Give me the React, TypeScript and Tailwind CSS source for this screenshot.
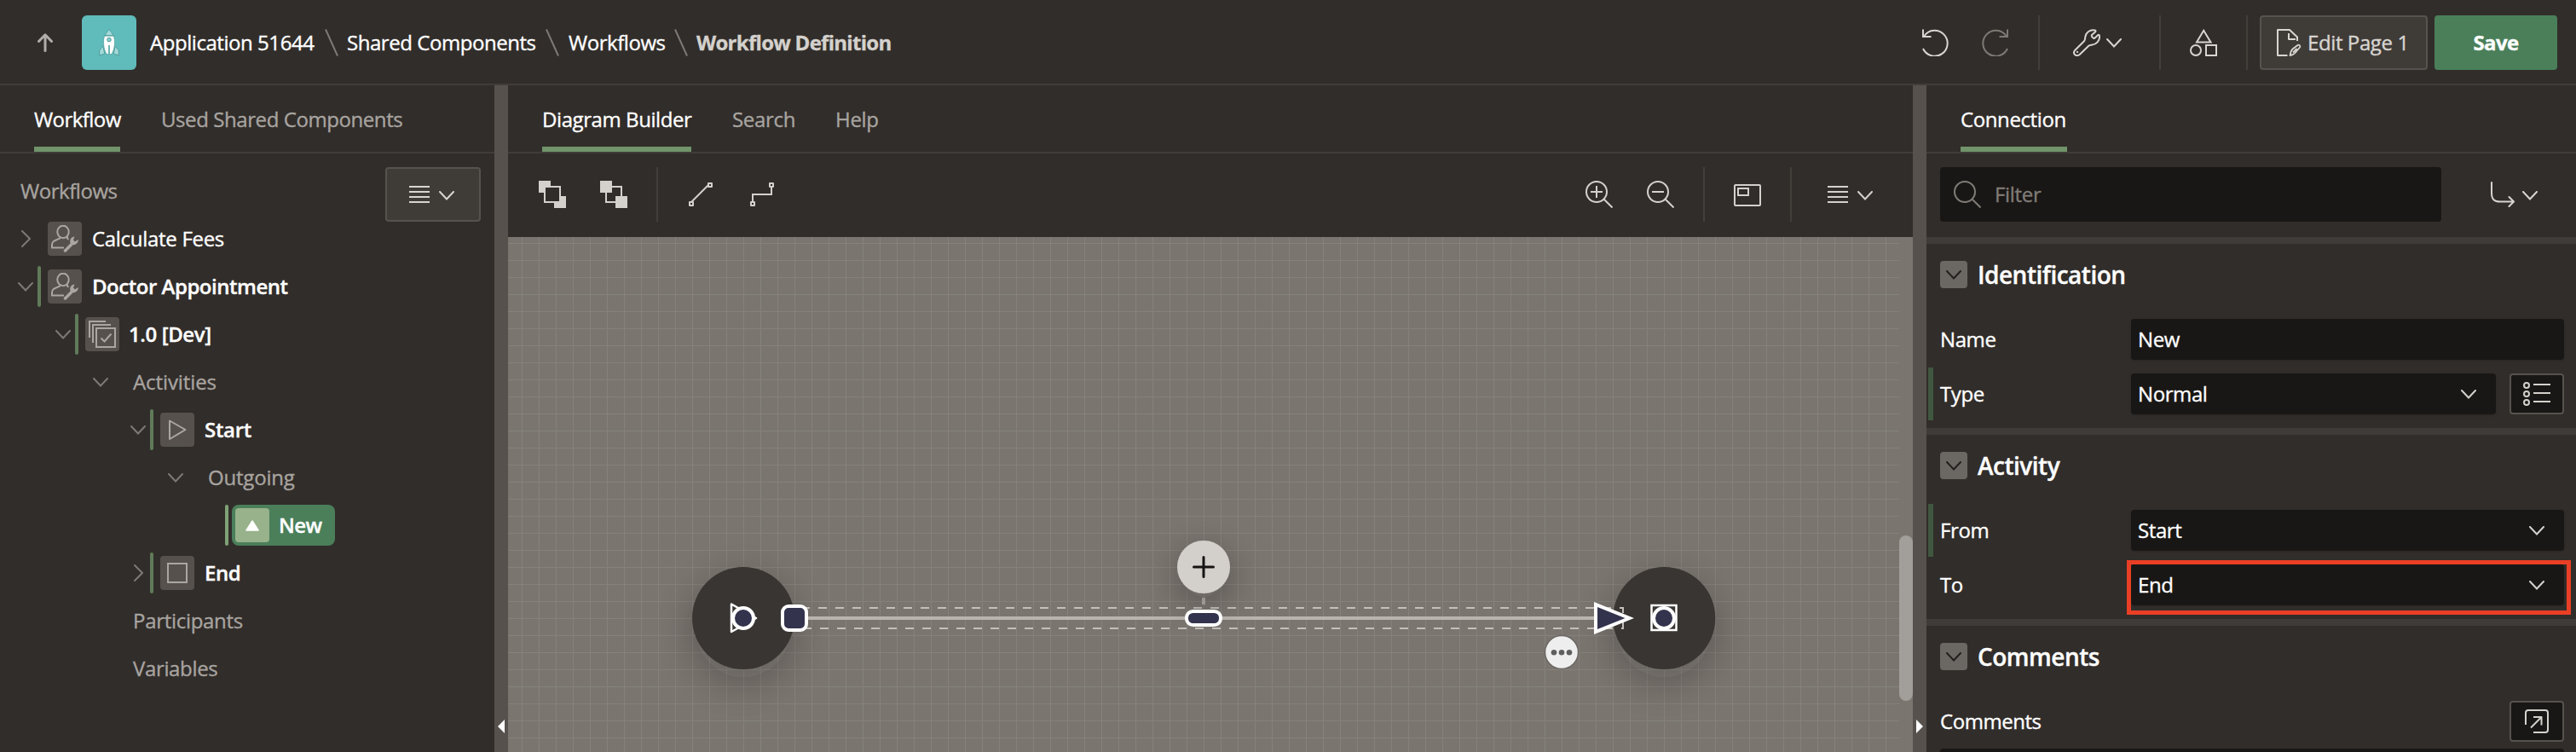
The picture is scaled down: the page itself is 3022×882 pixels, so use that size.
import React from "react";

type IconProps = { className?: string };

function Chevron({ open = true, className = "" }: { open?: boolean; className?: string }) {
  return open ? (
    <svg viewBox="0 0 18 11" width="18" height="11" className={`shrink-0 ${className}`} fill="none" stroke="currentColor" strokeWidth="2" strokeLinecap="round">
      <path d="M1 1l8 8.500L17 1" />
    </svg>
  ) : (
    <svg viewBox="0 0 11 20" width="11" height="20" className={`shrink-0 ${className}`} fill="none" stroke="currentColor" strokeWidth="2" strokeLinecap="round">
      <path d="M1 1l9 9-9 9" />
    </svg>
  );
}

function MenuLines({ className = "" }: IconProps) {
  return (
    <svg viewBox="0 0 24 20" width="24" height="20" className={`shrink-0 ${className}`} fill="currentColor">
      <path d="M0 0h24v2H0zM0 6h24v2H0zM0 12h24v2H0zM0 18h24v2H0z" />
    </svg>
  );
}

function Stroke32({ children, className = "" }: { children: React.ReactNode; className?: string }) {
  return (
    <svg viewBox="0 0 32 32" width="32" height="32" className={`shrink-0 ${className}`} fill="none" stroke="currentColor" strokeWidth="2">
      {children}
    </svg>
  );
}

function Rocket() {
  return (
    <svg viewBox="0 0 24 32" width="24" height="32">
      <path d="M5 20L.7 25v6l6-2zM19 20l4.300 5v6l-6-2z" fill="#a3d9d9" stroke="#4d9c9c" strokeWidth="1" />
      <path d="M12 .8C9.500 3.500 7.500 6.300 6.800 9h10.400C16.500 6.300 14.500 3.500 12 .8z" fill="#a3d9d9" stroke="#4d9c9c" strokeWidth="0.800" />
      <path d="M6.500 8h11c1.700 7 1.300 15-2.500 21.500h-6C5.200 23 4.800 15 6.500 8z" fill="#fff" stroke="#4d9c9c" strokeWidth="0.700" />
      <path d="M6.500 7.800h11" stroke="#4d9c9c" strokeWidth="1" />
      <circle cx="12" cy="12.600" r="2.300" fill="#8ccfcf" stroke="#4d9c9c" strokeWidth="1" />
      <path d="M12 19v12" stroke="#6fb3b3" strokeWidth="2" />
    </svg>
  );
}

function Slash({ className = "" }: IconProps) {
  return (
    <svg viewBox="0 0 16 32" width="16" height="32" className={`shrink-0 ${className}`} fill="none" stroke="#7d7974" strokeWidth="2">
      <path d="M1 .5L15 31.500" />
    </svg>
  );
}

function Sep({ className = "" }: IconProps) {
  return <div className={`h-16 w-0.5 shrink-0 bg-[#423e3a] ${className}`} />;
}

function Header() {
  return (
    <header className="flex h-[100px] shrink-0 items-center border-b-2 border-[#403c38] pr-[22px] pl-11 pt-0.5">
      <svg viewBox="0 0 18 22" width="18" height="22" className="shrink-0 text-[#b1ada8]" fill="none" stroke="currentColor" strokeWidth="3">
        <path d="M9 20.500V2M1.500 9.500L9 1.800l7.500 7.700" strokeLinecap="round" strokeLinejoin="round" />
      </svg>
      <div className="ml-[34px] flex size-16 shrink-0 items-center justify-center rounded-md bg-[#60bbbb]">
        <Rocket />
      </div>
      <nav className="ml-4 flex items-center text-white">
        <span className="w-[205px] tracking-[-0.45px]">Application 51644</span>
        <Slash />
        <span className="ml-2.5 w-[233px] tracking-[-0.45px]">Shared Components</span>
        <Slash />
        <span className="ml-[11px] w-[124px] tracking-[-0.45px]">Workflows</span>
        <Slash />
        <span className="ml-2.5 font-bold tracking-[-0.72px] text-[#d4d1cd]">Workflow Definition</span>
      </nav>
      <div className="ml-auto flex items-center text-[#d8d5d1]">
        <Stroke32>
          <path d="M1 0.500v8.500h9.500M2.500 8A15 15 0 1 1 1 23" />
        </Stroke32>
        <Stroke32 className="ml-[37px] text-[#7d7974]">
          <path d="M31 0.500v8.500h-9.500M29.500 8A15 15 0 1 0 31 23" />
        </Stroke32>
        <Sep className="ml-[35px] bg-[#3a3632]" />
        <Stroke32 className="ml-[39px]">
          <path d="M1.900 25.300L13 14.300C14.300 13 14 11 14.300 9.300 15 4 20 .300 25.500 1.500c1.300.3 1.300 1 .5 2L22.500 6.500c-.8.700-1 1.300-.5 2.300l1.400 1.600c.8.700 1.400.7 2.300 0L29 7.300c1-.8 1.900-.6 2 .7.600 5.500-3.500 10-8.500 10.600-1.500.2-3 .1-4.200 1.200L7.700 30C3.700 33 -.800 29 1.900 25.300z" strokeLinejoin="round" />
          <circle cx="5" cy="27" r="0.800" fill="currentColor" strokeWidth="1" />
        </Stroke32>
        <Chevron className="ml-[7px]" />
        <Sep className="ml-11" />
        <Stroke32 className="ml-[34px]">
          <path d="M16.200 1.800L24.500 15.500H8zM19 19h12v12H19z" />
          <circle cx="7" cy="25" r="6" />
        </Stroke32>
        <Sep className="ml-[34px]" />
        <div className="ml-3.5 flex h-16 w-[197px] items-center rounded border-2 border-[#56524d] bg-[#3f3b37] pl-[18px]">
          <Stroke32>
            <path d="M12.500 31H1V1h14l9 8.500V14M14 5v7h8" strokeLinejoin="round" />
            <path d="M15.500 31c.3-3 1-5.500 3-7.500l6-4.500c1.500-1 3.500.5 2.500 2.500l-5.500 6.500c-1.500 1.800-3.500 2.600-6 3zM19 27.500l4.500-4.500" strokeLinejoin="round" strokeWidth="1.800" />
          </Stroke32>
          <span className="ml-1 tracking-[-0.4px]">Edit Page 1</span>
        </div>
        <div className="ml-2 flex h-16 w-36 items-center justify-center rounded bg-[#4a7f5a] font-bold tracking-[-0.6px] text-white">Save</div>
      </div>
    </header>
  );
}

function Tab({ label, active = false, className = "" }: { label: string; active?: boolean; className?: string }) {
  return (
    <div className={`flex h-full items-center border-b-6 pt-2 ${active ? "border-[#71946a] text-white" : "border-transparent text-[#a8a4a0]"} ${className}`}>
      {label}
    </div>
  );
}

function TabBar({ children, className = "" }: { children: React.ReactNode; className?: string }) {
  return <div className={`flex h-20 shrink-0 border-b-2 border-[#403c38] ${className}`}>{children}</div>;
}

function UserWrench() {
  return (
    <svg viewBox="0 0 32 32" width="32" height="32" fill="none" stroke="currentColor" strokeWidth="2">
      <path d="M10.500 15.500C3 18.500 1 19.500 1 23v3.500h14M10.500 15.500v-2M19 13.500v2l1.500 1.200" />
      <ellipse cx="14" cy="8" rx="6.700" ry="7.300" />
      <path d="M16.500 30L24 22.500" strokeWidth="3.500" strokeLinecap="round" />
      <path d="M27.500 13.500c-4 .5-6 3.500-5 7.500 1 3 7.500 3.500 9.200-2.500l-.2-1.500-3.500 2.500-2-2z" fill="currentColor" stroke="none" />
    </svg>
  );
}

function Versions() {
  return (
    <svg viewBox="0 0 32 32" width="32" height="32" fill="none" stroke="currentColor" strokeWidth="2">
      <path d="M1 20V1h19M5 26V5h21M9 9h22v22H9zM14.500 20.500l4 4 8-9" />
    </svg>
  );
}

function PlayIcon() {
  return (
    <svg viewBox="0 0 32 32" width="32" height="32" fill="none" stroke="currentColor" strokeWidth="2">
      <path d="M7 5.500v21.500L25.500 16z" strokeLinejoin="round" />
    </svg>
  );
}

function BoxIcon() {
  return (
    <svg viewBox="0 0 32 32" width="32" height="32" fill="none" stroke="currentColor" strokeWidth="2">
      <path d="M5 5h22v22H5z" />
    </svg>
  );
}

type RowProps = {
  label: string;
  indent: string;
  state?: "open" | "closed";
  icon?: React.ReactNode;
  bar?: boolean;
  muted?: boolean;
  text?: string;
};

function TreeRow({ label, indent, state, icon, bar, muted, text = "" }: RowProps) {
  return (
    <div className={`flex h-14 items-center ${indent}`}>
      <div className="flex w-[23px] shrink-0 text-[#7d7974]">
        {state && <Chevron open={state === "open"} className={state === "closed" ? "ml-1" : ""} />}
      </div>
      <div className={`h-12 w-1 shrink-0 rounded-full ${bar ? "bg-[#607b59]" : ""}`} />
      {icon ? (
        <div className="mr-3 ml-2 flex size-10 shrink-0 items-center justify-center rounded bg-[#56514c] text-[#aaa6a2]">{icon}</div>
      ) : (
        <div className="w-5" />
      )}
      <span className={`${muted ? "text-[#a8a4a0]" : "text-white"} ${text}`}>{label}</span>
    </div>
  );
}

function TreePanel() {
  return (
    <aside className="flex w-[580px] shrink-0 flex-col">
      <TabBar className="pl-10">
        <Tab label="Workflow" active className="w-[101px] tracking-[-0.55px]" />
        <Tab label="Used Shared Components" className="ml-12 tracking-[-0.42px]" />
      </TabBar>
      <div className="flex items-start justify-between pt-4 pr-4">
        <div className="flex flex-col">
          <div className="flex h-14 items-center pl-6 tracking-[-0.45px] text-[#a8a4a0]">Workflows</div>
          <TreeRow label="Calculate Fees" indent="pl-[21px]" state="closed" icon={<UserWrench />} text="tracking-[-0.3px]" />
          <TreeRow label="Doctor Appointment" indent="pl-[21px]" state="open" bar icon={<UserWrench />} text="font-semibold tracking-[-0.48px]" />
          <TreeRow label="1.0 [Dev]" indent="pl-[65px]" state="open" bar icon={<Versions />} text="-ml-px font-semibold tracking-[-0.4px]" />
          <TreeRow label="Activities" indent="pl-[109px]" state="open" muted text="tracking-[-0.1px]" />
          <TreeRow label="Start" indent="pl-[153px]" state="open" bar icon={<PlayIcon />} text="font-semibold tracking-[-0.3px]" />
          <TreeRow label="Outgoing" indent="pl-[197px]" state="open" muted text="tracking-[-0.2px]" />
          <div className="flex h-14 items-center pl-[264px]">
            <div className="h-12 w-1 rounded-full bg-[#7fa276]" />
            <div className="ml-1 flex h-12 w-[121px] items-center rounded-lg bg-[#4a7f5a] pl-1">
              <div className="flex size-10 items-center justify-center rounded bg-[#98b28c]">
                <svg viewBox="0 0 16 13" width="16" height="13" fill="#fff" stroke="#fff" strokeWidth="1.500" strokeLinejoin="round">
                  <path d="M8 1l7 11H1z" />
                </svg>
              </div>
              <span className="ml-[11px] font-semibold tracking-[-0.6px] text-white">New</span>
            </div>
          </div>
          <TreeRow label="End" indent="pl-[153px]" state="closed" bar icon={<BoxIcon />} text="font-semibold tracking-[-0.4px]" />
          <TreeRow label="Participants" indent="pl-[109px]" muted text="tracking-[-0.3px]" />
          <TreeRow label="Variables" indent="pl-[109px]" muted text="tracking-[-0.35px]" />
        </div>
        <div className="flex h-16 w-28 items-center rounded border-2 border-[#56524d] bg-[#3f3b37] pl-[26px] text-[#d8d5d1]">
          <MenuLines />
          <Chevron className="ml-[11px] mt-0.5" />
        </div>
      </div>
    </aside>
  );
}

function Splitter({ right = false }: { right?: boolean }) {
  return (
    <div className="flex w-4 shrink-0 items-end justify-center bg-[#56514c] pb-[22px]">
      <svg viewBox="0 0 8 16" width="8" height="16" fill="#fff">
        {right ? <path d="M0 0l8 8-8 8z" /> : <path d="M8 0L0 8l8 8z" />}
      </svg>
    </div>
  );
}

function Diagram() {
  const navy = "#33334d";
  return (
    <svg viewBox="596 278 1632 604" width="1632" height="604" className="block shrink-0">
      <defs>
        <pattern id="grid" x="612" y="285" width="20" height="20" patternUnits="userSpaceOnUse">
          <path d="M0 0h20v1H0zM0 1h1v19H0z" fill="#85817b" />
        </pattern>
        <filter id="soft" x="-100%" y="-100%" width="300%" height="300%">
          <feDropShadow dx="0" dy="14" stdDeviation="24" floodColor="#1c1816" floodOpacity="0.280" />
        </filter>
        <filter id="small" x="-100%" y="-100%" width="300%" height="300%">
          <feDropShadow dx="0" dy="12" stdDeviation="20" floodColor="#1c1816" floodOpacity="0.300" />
        </filter>
      </defs>
      <rect x="596" y="278" width="1632" height="604" fill="#7a756f" />
      <rect x="596" y="278" width="1632" height="604" fill="url(#grid)" />

      <circle cx="872" cy="725" r="60" fill="#393530" filter="url(#soft)" />
      <circle cx="1952.300" cy="725" r="60" fill="#393530" filter="url(#soft)" />

      <path d="M940 713H1904V737H940" fill="none" stroke="#c3bfbb" strokeWidth="2" strokeDasharray="10 10" />
      <path d="M932 725H1872" stroke="#b9b4ae" strokeWidth="4" />
      <path d="M1412 701v8" stroke="#b0aca7" strokeWidth="4" />

      <path d="M858 708.500v32.500l29-16z" fill="none" stroke="#fff" strokeWidth="2.500" strokeLinejoin="round" />
      <circle cx="872" cy="725" r="12" fill={navy} stroke="#fff" strokeWidth="4" />
      <rect x="918" y="711" width="28" height="28" rx="7" fill={navy} stroke="#fff" strokeWidth="4" />

      <circle cx="1412" cy="665" r="31" fill="#d3cfcb" filter="url(#small)" />
      <path d="M1412 653.500v23M1400.500 665h23" stroke="#161513" strokeWidth="3" strokeLinecap="round" />
      <rect x="1392" y="717" width="40" height="16" rx="7.500" fill={navy} stroke="#fff" strokeWidth="4" />

      <path d="M1870 706v38l47-19z" fill="#fff" />
      <path d="M1874 712v26l32.500-13z" fill={navy} />
      <rect x="1937.500" y="710" width="29" height="29" fill="none" stroke="#fff" strokeWidth="2.500" />
      <circle cx="1952" cy="725" r="12" fill={navy} stroke="#fff" strokeWidth="4" />

      <circle cx="1832" cy="765" r="19.500" fill="#eee" stroke="#6a6663" strokeWidth="1.500" />
      <g fill="#5f5f5f">
        <circle cx="1823" cy="765.300" r="3.300" />
        <circle cx="1832" cy="765.300" r="3.300" />
        <circle cx="1841" cy="765.300" r="3.300" />
      </g>
    </svg>
  );
}

function CanvasPanel() {
  return (
    <main className="flex min-w-0 flex-1 flex-col">
      <TabBar className="pl-10">
        <Tab label="Diagram Builder" active className="w-[175px] tracking-[-0.42px]" />
        <Tab label="Search" className="ml-12 w-[74px] tracking-[-0.3px]" />
        <Tab label="Help" className="ml-[47px] tracking-[-0.3px]" />
      </TabBar>
      <div className="flex h-[98px] shrink-0 items-center pr-[47px] pl-9 pb-[2px] text-[#d4d1cd]">
        <Stroke32>
          <path d="M0 0h14v6H6v8H0zM26 18h6v14H18v-6h8z" fill="currentColor" stroke="none" />
          <path d="M7 7h18v18H7z" />
        </Stroke32>
        <Stroke32 className="ml-10">
          <path d="M7 7h18v18H7z" />
          <path d="M0 0h14v14H0zM18 18h14v14H18z" fill="currentColor" stroke="none" />
        </Stroke32>
        <Sep className="ml-[34px]" />
        <Stroke32 className="ml-[34px]">
          <path d="M4 26L26 4" />
          <path d="M3 25h4v4H3zM25 3h4v4h-4z" fill="#312d2a" strokeLinejoin="round" />
        </Stroke32>
        <Stroke32 className="ml-10">
          <path d="M5 26V16h22V6" />
          <path d="M3 25h4v4H3zM25 3h4v4h-4z" fill="#312d2a" strokeLinejoin="round" />
        </Stroke32>
        <div className="ml-auto flex items-center">
          <Stroke32>
            <circle cx="13" cy="13" r="12" />
            <path d="M21.500 21.500L31.500 31.500M13 6v14M6 13h14" />
          </Stroke32>
          <Stroke32 className="ml-10">
            <circle cx="13" cy="13" r="12" />
            <path d="M21.500 21.500L31.500 31.500M6 13h14" />
          </Stroke32>
          <Sep className="ml-[34px]" />
          <Stroke32 className="ml-[34px]">
            <rect x="1" y="5" width="30" height="24" rx="1" />
            <path d="M5 9h12v8H5z" />
          </Stroke32>
          <Sep className="ml-[34px]" />
          <MenuLines className="ml-[42px]" />
          <Chevron className="ml-[11px] mt-0.5" />
        </div>
      </div>
      <div className="flex h-[604px] bg-[#7a756f]">
        <Diagram />
        <div className="w-4 pt-[350px]">
          <div className="h-[194px] w-4 rounded-full bg-[#a29e99]" />
        </div>
      </div>
    </main>
  );
}

function Section({ title, children }: { title: string; children: React.ReactNode }) {
  return (
    <section className="flex shrink-0 flex-col border-t-8 border-[#3f3b38] pt-5">
      <div className="mb-7 flex h-8 items-center pl-4">
        <div className="flex size-8 items-center justify-center rounded bg-[#6b6762] text-[#231f1d]">
          <Chevron />
        </div>
        <h2 className="ml-3 text-[28px] leading-8 font-semibold tracking-[-0.5px] text-white">{title}</h2>
      </div>
      {children}
    </section>
  );
}

function Field({ label, required = false, children }: { label: string; required?: boolean; children: React.ReactNode }) {
  return (
    <div className="flex h-16 items-center pr-3.5">
      <div className={`ml-0.5 h-[62px] w-1.5 ${required ? "bg-[#40573f]" : ""}`} />
      <div className="ml-2 w-56 tracking-[-0.4px] text-white">{label}</div>
      {children}
    </div>
  );
}

function Input({ value, select = false, className = "flex-1" }: { value: string; select?: boolean; className?: string }) {
  return (
    <div className={`flex h-12 items-center justify-between rounded bg-[#191715] pr-[23px] pl-2 tracking-[-0.4px] text-white shadow-sm ${className}`}>
      {value}
      {select && <Chevron className="text-[#d4d1cd]" />}
    </div>
  );
}

function SideButton({ children }: { children: React.ReactNode }) {
  return (
    <div className="ml-4 flex h-12 w-16 items-center justify-center rounded border-2 border-[#56524d] bg-[#191715] text-[#d4d1cd]">
      {children}
    </div>
  );
}

function PropertyPanel() {
  return (
    <aside className="flex w-[762px] shrink-0 flex-col overflow-hidden">
      <TabBar className="pl-10">
        <Tab label="Connection" active className="w-[125px] tracking-[-0.4px]" />
      </TabBar>
      <div className="flex h-[98px] shrink-0 items-center pr-[45px] pl-4 pb-0.5">
        <div className="flex h-16 w-[588px] items-center rounded bg-[#191715] pl-4 text-[#807c77]">
          <Stroke32>
            <circle cx="13" cy="13" r="12" />
            <path d="M22 22l9.500 9.500" />
          </Stroke32>
          <span className="ml-4 tracking-[-0.3px]">Filter</span>
        </div>
        <div className="ml-auto flex items-center text-[#d8d5d1]">
          <svg viewBox="0 0 28 30" width="28" height="30" fill="none" stroke="currentColor" strokeWidth="2" strokeLinecap="round" strokeLinejoin="round">
            <path d="M1 1v12c0 8 3 10.500 10 10.500h16M21.500 18l5.500 5.500-5.500 5.500" />
          </svg>
          <Chevron className="ml-[9px] mt-0.5" />
        </div>
      </div>
      <Section title="Identification">
        <Field label="Name">
          <Input value="New" />
        </Field>
        <Field label="Type" required>
          <Input value="Normal" select />
          <SideButton>
            <svg viewBox="0 0 32 28" width="32" height="28" fill="none" stroke="currentColor" strokeWidth="2">
              <circle cx="4" cy="4" r="3" />
              <circle cx="4" cy="14" r="3" />
              <circle cx="4" cy="24" r="3" />
              <path d="M12 3h20M12 13h20M12 23h20" />
            </svg>
          </SideButton>
        </Field>
        <div className="h-2" />
      </Section>
      <Section title="Activity">
        <Field label="From" required>
          <Input value="Start" select />
        </Field>
        <Field label="To">
          <div className="relative flex flex-1">
            <Input value="End" select />
            <div className="absolute -top-[5px] -right-2 -left-[5px] h-16 border-5 border-[#ea3f25]" />
          </div>
        </Field>
        <div className="h-2" />
      </Section>
      <Section title="Comments">
        <div className="flex h-16 items-center justify-between pr-3.5 pl-4 text-white">
          <span className="tracking-[-0.45px]">Comments</span>
          <SideButton>
            <svg viewBox="0 0 28 28" width="28" height="28" fill="none" stroke="currentColor" strokeWidth="2" strokeLinejoin="round">
              <path d="M1 18V4a3 3 0 0 1 3-3h20a3 3 0 0 1 3 3v20a3 3 0 0 1-3 3H10" />
              <path d="M7 21.500L19.500 9M10 9h9.500v9.500" />
            </svg>
          </SideButton>
        </div>
        <div className="mr-3.5 ml-4 h-20 rounded bg-[#191715]" />
      </Section>
    </aside>
  );
}

export default function App() {
  return (
    <div className="flex h-[882px] w-[3022px] flex-col overflow-hidden bg-[#312d2a] font-['Open_Sans','Noto_Sans',sans-serif] text-2xl leading-8 whitespace-nowrap [-webkit-text-stroke:0.35px]">
      <Header />
      <div className="flex h-[782px]">
        <TreePanel />
        <Splitter />
        <CanvasPanel />
        <Splitter right />
        <PropertyPanel />
      </div>
    </div>
  );
}
